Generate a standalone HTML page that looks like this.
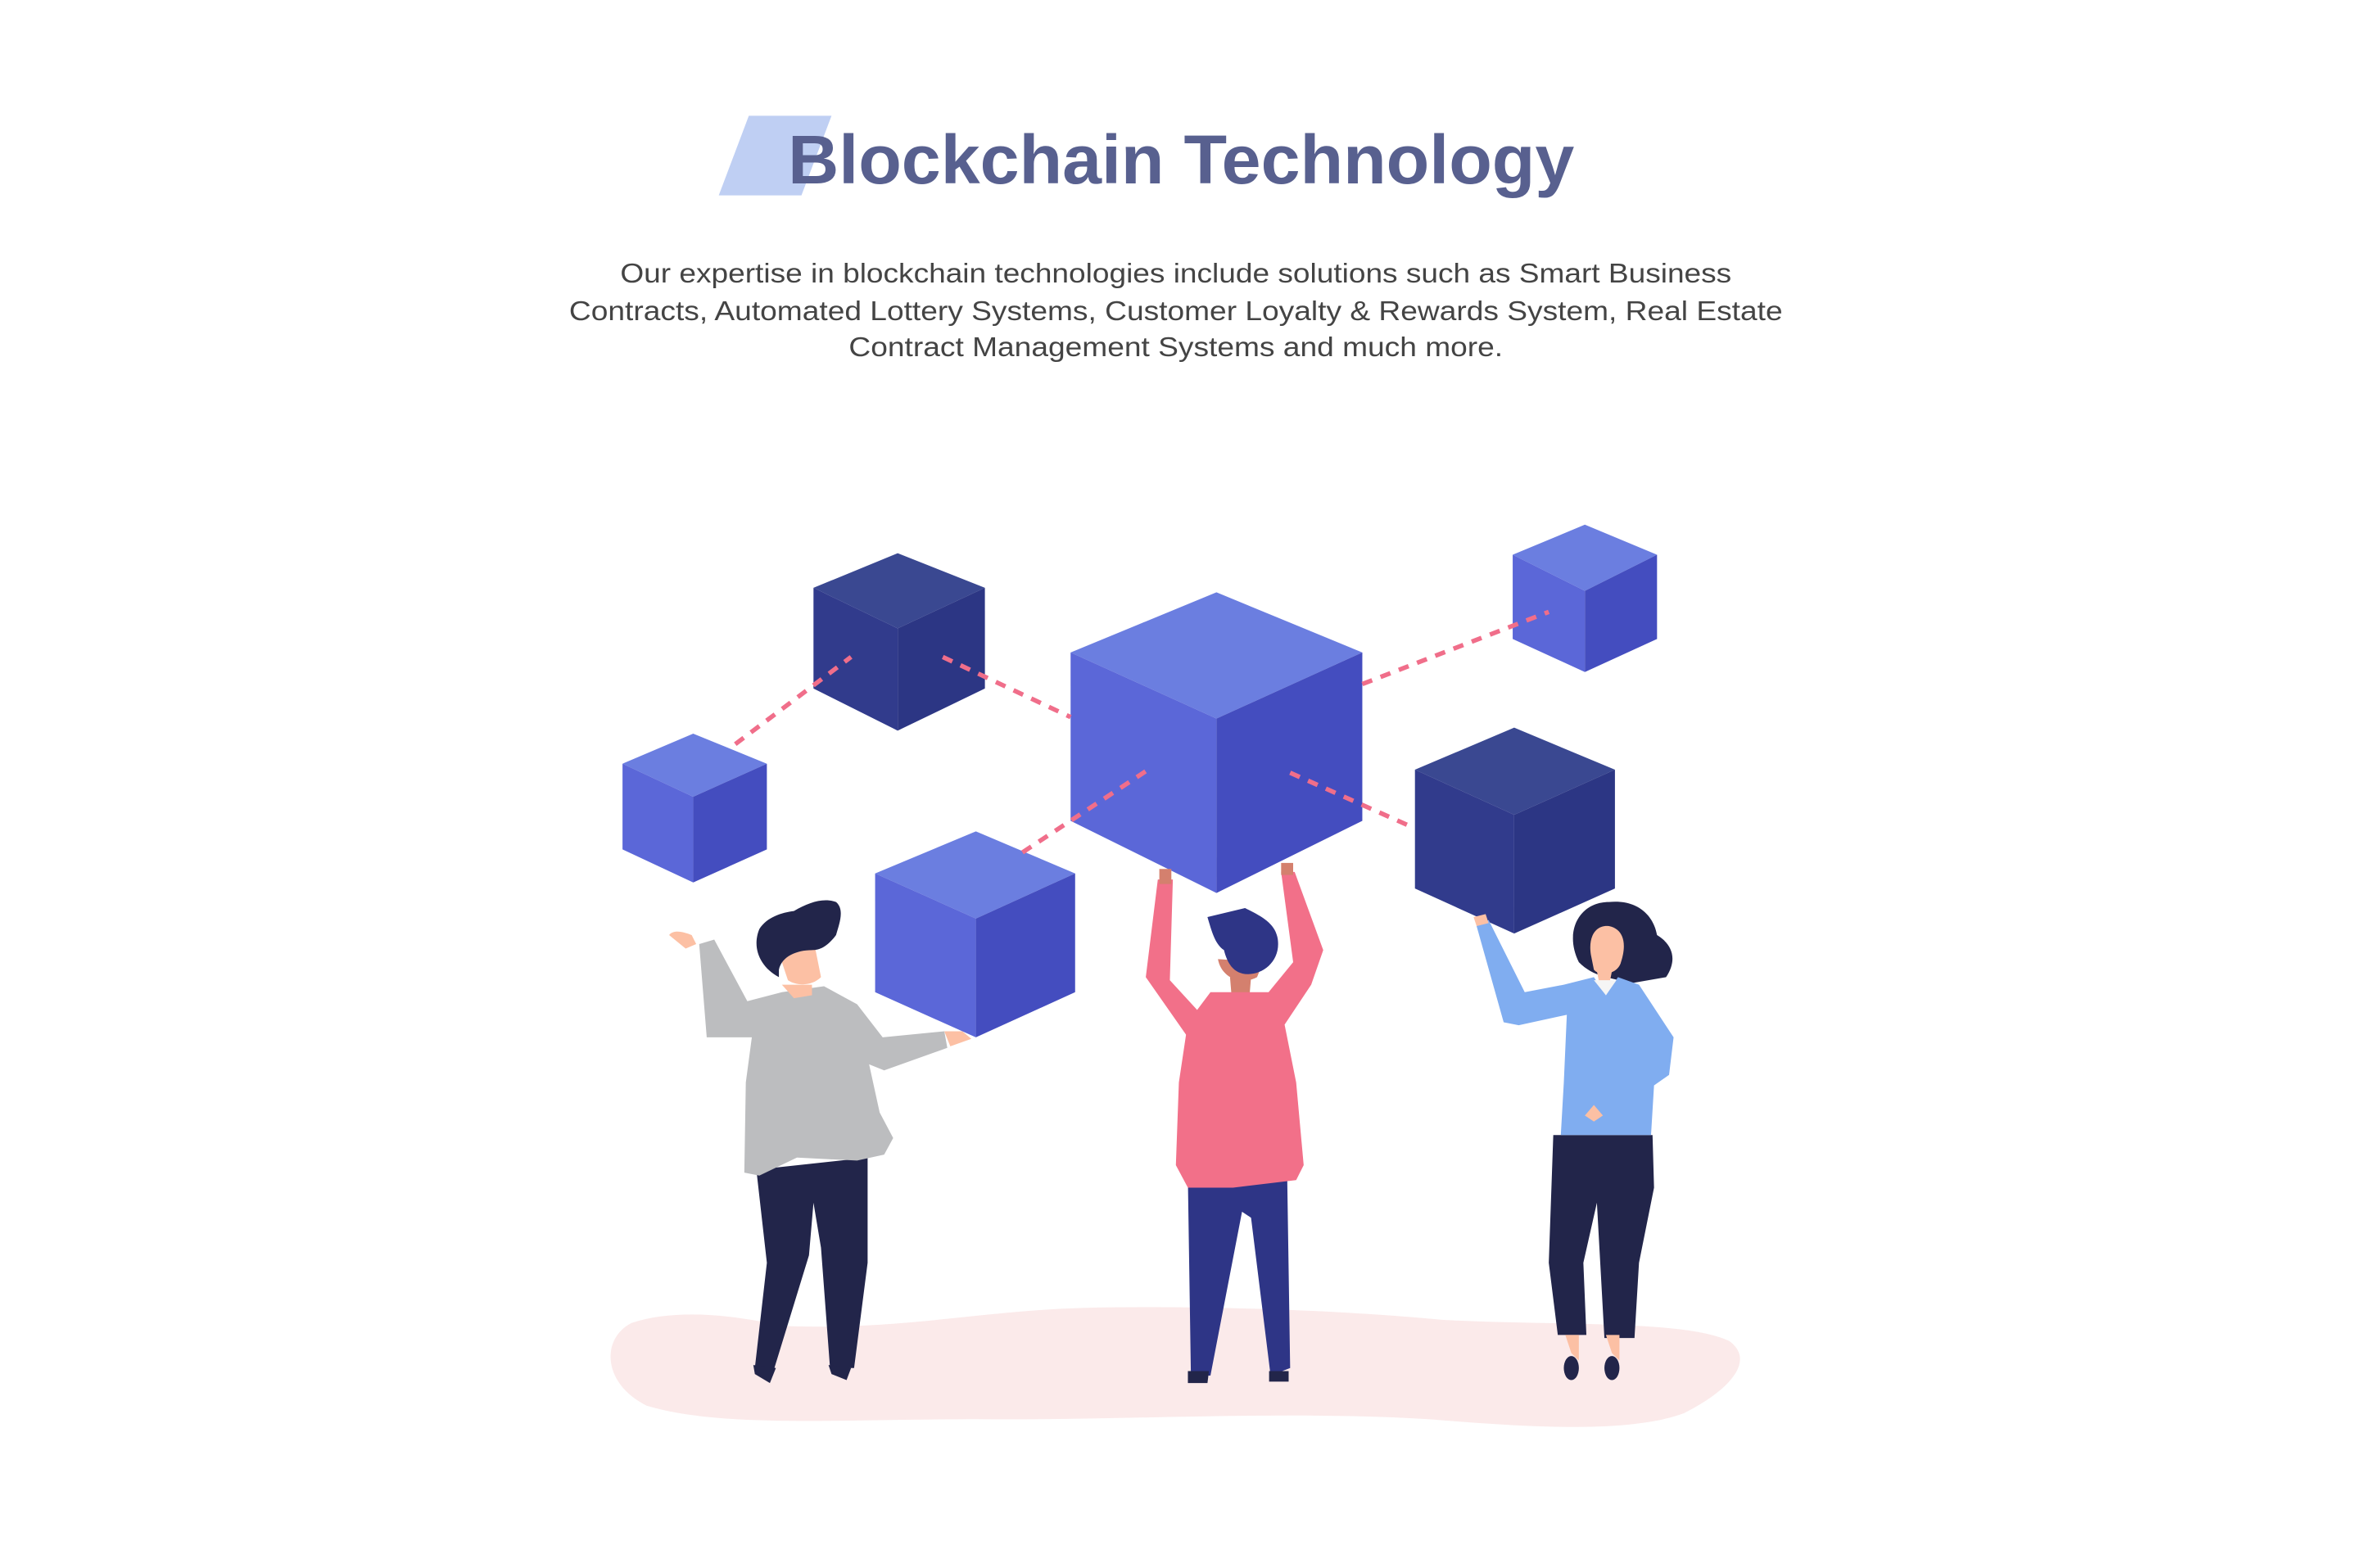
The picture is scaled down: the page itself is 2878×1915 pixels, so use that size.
<!DOCTYPE html>
<html><head><meta charset="utf-8"><style>
html,body{margin:0;padding:0;background:#fff;width:2878px;height:1915px;overflow:hidden}
svg{display:block}
</style></head><body>
<svg width="2878" height="1915" viewBox="0 0 1567.5 1043" preserveAspectRatio="none" xmlns="http://www.w3.org/2000/svg">
<polygon points="478,130 498,77 553,77 533,130" fill="#bfcff3"/>
<text x="524" y="122" font-family="Liberation Sans, sans-serif" font-weight="bold" font-size="46" fill="#58608f" textLength="523" lengthAdjust="spacingAndGlyphs">Blockchain Technology</text>
<g font-family="Liberation Sans, sans-serif" font-size="18" fill="#444" text-anchor="middle">
<text x="782" y="188" textLength="739" lengthAdjust="spacingAndGlyphs">Our expertise in blockchain technologies include solutions such as Smart Business</text>
<text x="782" y="213" textLength="807" lengthAdjust="spacingAndGlyphs">Contracts, Automated Lottery Systems, Customer Loyalty &amp; Rewards System, Real Estate</text>
<text x="782" y="237" textLength="435" lengthAdjust="spacingAndGlyphs">Contract Management Systems and much more.</text>
</g>
<path d="M420,880 C450,870 490,875 520,882 C600,885 650,872 720,870 C800,868 900,872 960,878 C1040,882 1120,878 1150,892 C1168,905 1150,925 1120,940 C1080,955 1000,948 950,944 C850,938 750,945 650,944 C560,944 480,950 430,935 C400,920 400,890 420,880Z" fill="#fbeaea"/>
<g>
<polygon points="597,368 655,391 597,418 541,391" fill="#3a4891"/>
<polygon points="541,391 597,418 597,486 541,458" fill="#313b8c"/>
<polygon points="597,418 655,391 655,458 597,486" fill="#2c3684"/>
</g>
<g>
<polygon points="461,488 510,508 461,530 414,508" fill="#6b7ee0"/>
<polygon points="414,508 461,530 461,587 414,565" fill="#5b67d8"/>
<polygon points="461,530 510,508 510,565 461,587" fill="#444dbf"/>
</g>
<g>
<polygon points="1054,349 1102,369 1054,393 1006,369" fill="#6b7ee0"/>
<polygon points="1006,369 1054,393 1054,447 1006,425" fill="#5b67d8"/>
<polygon points="1054,393 1102,369 1102,425 1054,447" fill="#444dbf"/>
</g>
<g>
<polygon points="649,553 715,581 649,611 582,581" fill="#6b7ee0"/>
<polygon points="582,581 649,611 649,690 582,660" fill="#5b67d8"/>
<polygon points="649,611 715,581 715,660 649,690" fill="#444dbf"/>
</g>
<g fill="#f27089">
<polygon points="770,585 780,585 778,652 800,676 790,690 762,650"/>
<polygon points="852,580 861,580 880,632 872,655 852,685 842,662 860,640"/>
</g>
<g>
<polygon points="809,394 906,434 809,478 712,434" fill="#6b7ee0"/>
<polygon points="712,434 809,478 809,594 712,546" fill="#5b67d8"/>
<polygon points="809,478 906,434 906,546 809,594" fill="#444dbf"/>
</g>
<g>
<polygon points="1007,484 1074,512 1007,542 941,512" fill="#3a4891"/>
<polygon points="941,512 1007,542 1007,621 941,591" fill="#313b8c"/>
<polygon points="1007,542 1074,512 1074,591 1007,621" fill="#2c3684"/>
</g>
<g stroke="#f06e8a" stroke-width="3" stroke-dasharray="7,6" fill="none">
<line x1="489" y1="495" x2="566" y2="437"/>
<line x1="627" y1="437" x2="712" y2="477"/>
<line x1="906" y1="455" x2="1030" y2="407"/>
<line x1="680" y1="567" x2="762" y2="513"/>
<line x1="858" y1="514" x2="941" y2="551"/>
</g>
<polygon points="503,778 577,770 577,840 568,910 552,910 546,830 541,800 538,835 515,910 502,910 510,840" fill="#22254a"/>
<polygon points="501,908 516,910 512,920 502,914" fill="#22254a"/>
<polygon points="551,908 566,910 563,918 553,914" fill="#22254a"/>
<path d="M445,622 C448,618 455,620 460,622 L463,628 L456,631 Z" fill="#fcc0a4"/>
<polygon points="628,686 640,686 646,691 632,696" fill="#fcc0a4"/>
<polygon points="465,628 475,625 497,666 520,660 548,656 570,668 587,690 628,686 630,697 588,712 578,708 585,740 594,757 588,768 570,772 530,770 505,782 495,780 496,720 500,690 470,690" fill="#bcbdbf"/>
<path d="M520,655 L540,655 L540,662 L528,664 Z" fill="#fcc0a4"/>
<path d="M520,640 C520,632 530,628 542,630 L546,650 C540,656 530,656 524,652 Z" fill="#fcc0a4"/>
<path d="M518,650 C505,643 500,630 505,618 C510,610 520,607 528,606 C538,600 548,597 556,600 C562,605 558,615 556,622 C550,630 545,632 540,632 C530,632 520,636 518,645 Z" fill="#22254a"/>
<polygon points="790,785 856,780 858,910 845,915 832,810 826,806 805,915 792,915" fill="#2e3586"/>
<polygon points="790,912 804,912 803,920 790,920" fill="#22254a"/>
<polygon points="844,912 857,912 857,919 844,919" fill="#22254a"/>
<polygon points="818,650 832,650 831,662 819,662" fill="#d4806e"/>
<path d="M810,638 C812,650 825,656 836,650 L840,640 Z" fill="#d4806e"/>
<path d="M805,660 L850,660 L862,720 L867,775 L862,785 L820,790 L790,790 L782,775 L784,720 L790,680 Z" fill="#f27089"/>
<path d="M803,610 L828,604 C840,610 850,615 850,628 C850,640 840,648 830,648 C820,648 816,640 814,632 C808,628 806,620 803,610Z" fill="#2e3586"/>
<polygon points="771,578 779,578 779,588 771,588" fill="#d4806e"/>
<polygon points="852,574 860,574 860,582 852,582" fill="#d4806e"/>
<polygon points="1033,755 1099,755 1100,790 1090,840 1087,890 1067,890 1062,800 1053,840 1055,888 1036,888 1030,840" fill="#22254a"/>
<polygon points="1041,888 1050,888 1050,905 1045,900" fill="#fcc0a4"/>
<polygon points="1068,888 1077,888 1077,905 1072,900" fill="#fcc0a4"/>
<ellipse cx="1045" cy="910" rx="5" ry="8" fill="#22254a"/>
<ellipse cx="1072" cy="910" rx="5" ry="8" fill="#22254a"/>
<path d="M1050,640 C1040,620 1050,600 1070,600 C1090,598 1100,610 1102,622 C1112,628 1116,638 1108,650 L1085,654 C1070,650 1060,650 1050,640Z" fill="#22254a"/>
<path d="M1058,635 C1056,622 1062,615 1070,616 C1080,618 1082,628 1078,640 C1076,648 1064,650 1060,645 Z" fill="#fcc0a4"/>
<polygon points="1062,646 1072,646 1070,656 1064,656" fill="#fcc0a4"/>
<polygon points="1040,655 1060,650 1068,662 1076,650 1090,655 1113,690 1110,715 1100,722 1098,755 1038,755 1040,720 1042,675 1010,682 1000,680 982,616 990,612 1014,660" fill="#80adf0"/>
<polygon points="1060,652 1075,652 1068,662" fill="#f5f5f5"/>
<path d="M1054,742 L1060,735 L1066,742 L1060,746 Z" fill="#fcc0a4"/>
<polygon points="980,610 988,608 990,614 982,616" fill="#fcc0a4"/>
</svg>
</body></html>
